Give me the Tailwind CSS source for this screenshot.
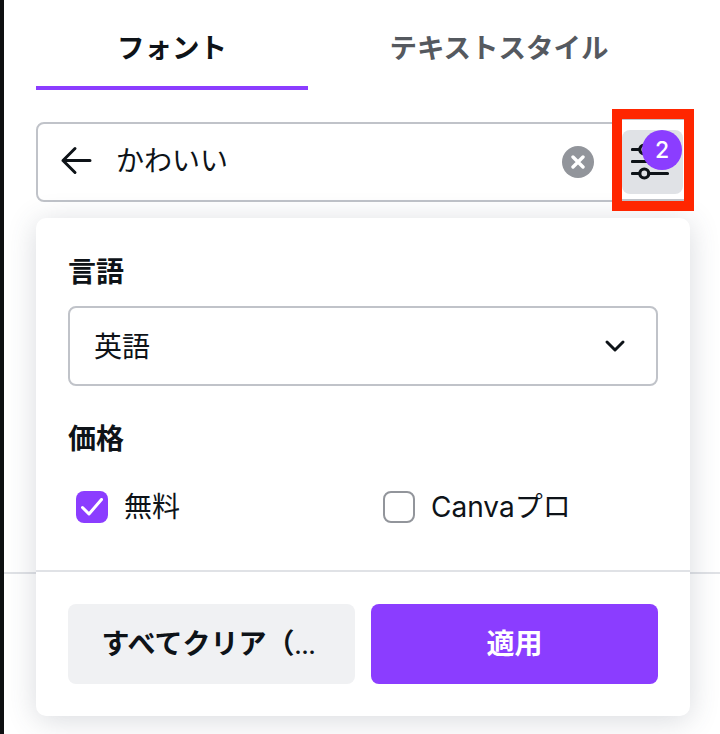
<!DOCTYPE html>
<html lang="ja">
<head>
    <meta charset="UTF-8">
    <title>フォント</title>
    <script src="https://cdn.jsdelivr.net/npm/@tailwindcss/browser@4"></script>
</head>
<body class="bg-white">
    <div class="relative w-[720px] h-[734px] overflow-hidden bg-white text-[#0e1318] font-['Inter','Noto_Sans_CJK_JP',sans-serif]">
        <!-- window edge + line behind the panel -->
        <div class="absolute left-0 top-0 bottom-0 w-[4px] bg-[#0e1011]"></div>
        <div class="absolute left-[4px] right-0 top-[572px] h-[2px] bg-[#e0e2e6]"></div>

        <div class="relative pl-[36px] pr-[30px]">
            <!-- tabs -->
            <div class="flex h-[90px] text-[27.500px] font-bold">
                <div class="w-[272px] flex items-center justify-center pt-[12px] border-b-[4px] border-[#8b3dff]">フォント</div>
                <div class="flex-1 flex items-center justify-center pt-[12px] pb-[4px] text-[#55595f]">テキストスタイル</div>
            </div>

            <!-- search -->
            <div class="mt-[32px] h-[80px] mr-[7px] flex items-center border-2 border-[#c0c3c9] rounded-lg pl-[22px]">
                <svg class="w-[34px] h-[34px]" viewBox="0 0 34 34" fill="none" stroke="#0e1318" stroke-width="3" stroke-linecap="round" stroke-linejoin="round">
                    <path d="M3 15.500h27M15 3.500 3 15.500l12 12"/>
                </svg>
                <span class="ml-[22px] pb-[3px] text-[28px]">かわいい</span>
                <div class="ml-auto mr-[87px] w-[32px] h-[32px] rounded-full bg-[#92959b] flex items-center justify-center">
                    <svg class="w-[14px] h-[14px]" viewBox="0 0 14 14" fill="none" stroke="#fff" stroke-width="3.400" stroke-linecap="round"><path d="M2 2l10 10M12 2 2 12"/></svg>
                </div>
            </div>

            <!-- panel -->
            <div class="mt-[16px] w-[654px] h-[498px] bg-white rounded-[10px] shadow-[0_4px_30px_rgba(60,70,90,0.2)] flex flex-col">
                <div class="px-[32px] pt-[35px] h-[354px] border-b-2 border-[#e0e2e6]">
                    <div class="text-[28px] font-bold leading-[38px]">言語</div>
                    <div class="mt-[15px] h-[80px] border-2 border-[#c0c3c9] rounded-lg flex items-center justify-between pl-[24px] pr-[29px] text-[28px]">
                        <span class="pt-[2px]">英語</span>
                        <svg class="w-[24px] h-[14px]" viewBox="0 0 24 14" fill="none" stroke="#0e1318" stroke-width="3" stroke-linecap="round" stroke-linejoin="round"><path d="M4 3l8 8 8-8"/></svg>
                    </div>
                    <div class="mt-[34px] text-[28px] font-bold leading-[38px]">価格</div>
                    <div class="mt-[33px] flex items-center h-[32px] pl-[8px] text-[28px]">
                        <div class="w-[32px] h-[32px] rounded-lg bg-[#8b3dff] flex items-center justify-center">
                            <svg class="w-[22px] h-[18px]" viewBox="0 0 22 18" fill="none" stroke="#fff" stroke-width="3" stroke-linecap="round" stroke-linejoin="round"><path d="M1.500 9.500l6.500 6.500L20.500 1.500"/></svg>
                        </div>
                        <span class="ml-[16px] w-[259px]">無料</span>
                        <div class="w-[32px] h-[32px] rounded-lg border-2 border-[#92959b]"></div>
                        <span class="ml-[16px]">Canvaプロ</span>
                    </div>
                </div>
                <div class="px-[32px] pt-[32px] flex gap-[16px] text-[28px] font-bold">
                    <div class="w-[287px] h-[80px] rounded-lg bg-[#f0f1f3] flex items-center justify-center pr-[6px]"><span>すべてクリア（<span class="text-[21px]">…</span></span></div>
                    <div class="w-[287px] h-[80px] rounded-lg bg-[#8b3dff] text-white flex items-center justify-center">適用</div>
                </div>
            </div>
        </div>

        <!-- filter button with badge and the red annotation frame, all over the search box -->
        <div class="absolute left-[612px] top-[109px] w-[82px] h-[102px] border-[10px] border-[#ff2600]">
            <div class="absolute inset-0 bg-white"></div>
            <div class="absolute left-0 right-0 top-0 h-[1px] bg-[#c0c3c9]"></div>
            <div class="absolute left-0 right-0 bottom-0 h-[2px] bg-[#c0c3c9]"></div>
            <div class="absolute left-0 top-[11px] w-[61px] h-[64px] rounded-lg bg-[#e0e2e6]">
                <svg class="absolute left-[9px] top-[13px] w-[40px] h-[38px]" viewBox="0 0 40 38" fill="none" stroke="#0e1318" stroke-width="3.200" stroke-linecap="round">
                    <path d="M1.500 6.500h7M1.500 18.500h36M1.500 30.500h7M18 30.500h18.500"/>
                    <circle cx="13.300" cy="6.500" r="4.500"/>
                    <circle cx="13.300" cy="30.500" r="4.500"/>
                </svg>
                <div class="absolute left-[20px] top-0 w-[40px] h-[40px] rounded-full bg-[#8b3dff] text-white text-[23px] font-medium flex items-center justify-center">2</div>
            </div>
        </div>
    </div>
</body>
</html>
